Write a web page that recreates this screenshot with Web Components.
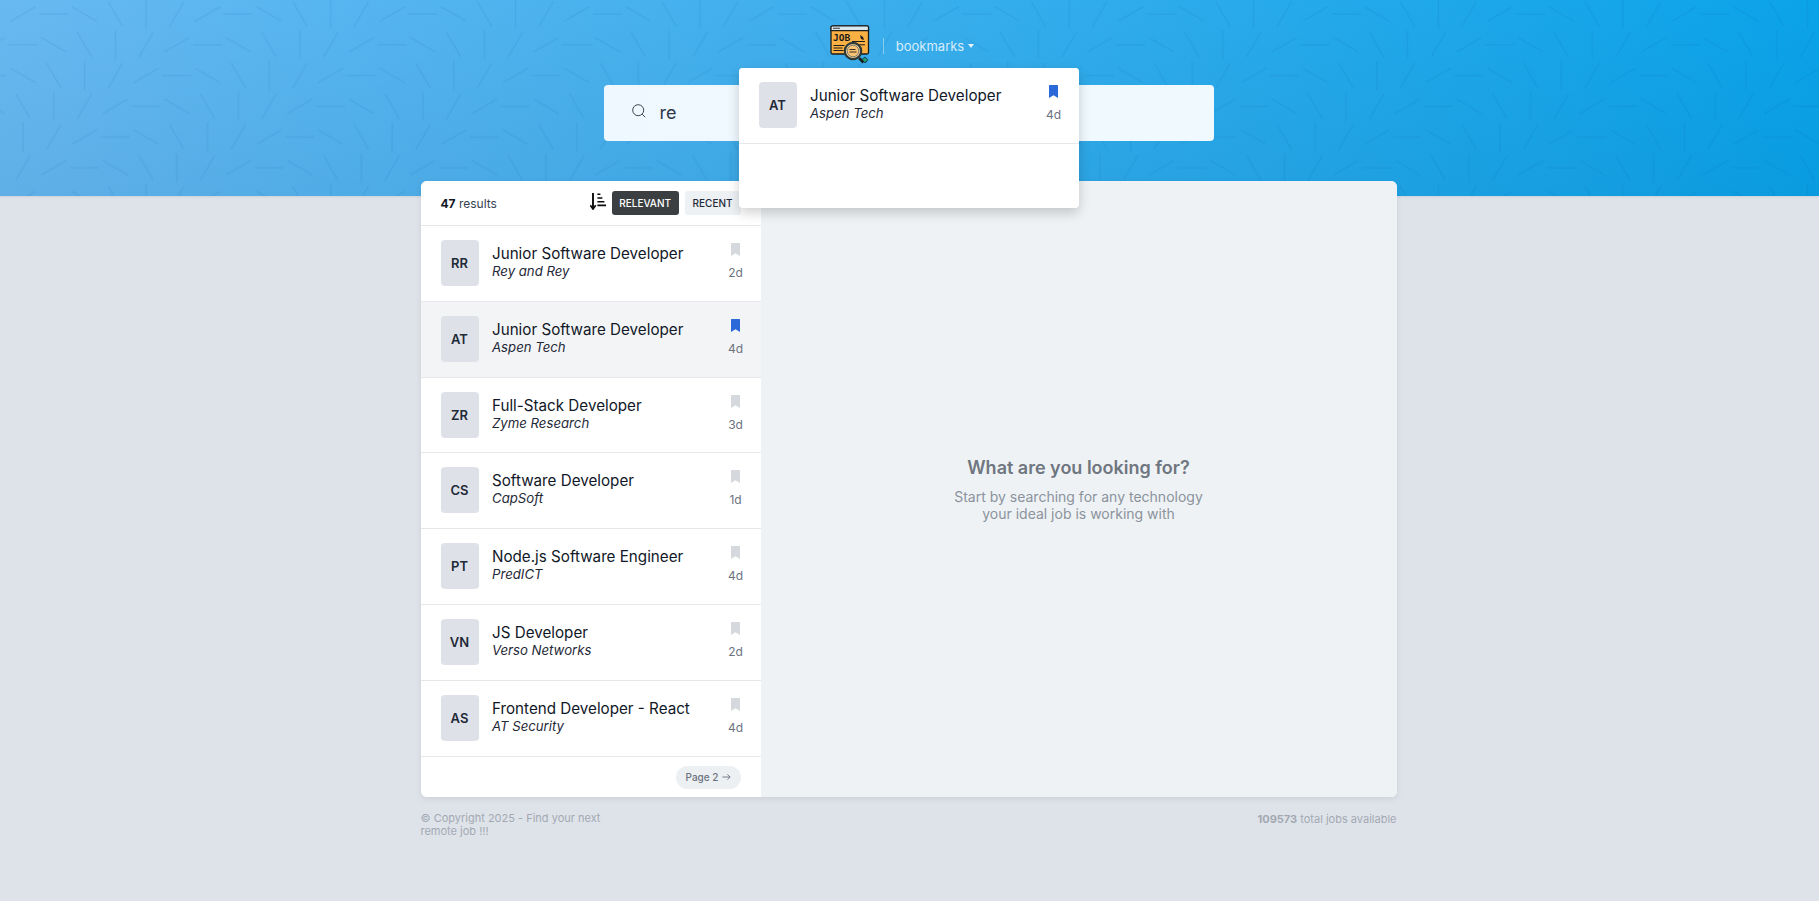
<!DOCTYPE html>
<html lang="en"><head><meta charset="utf-8"><title>Jobs</title>
<style>
html,body{margin:0;padding:0;height:100%}
body{background:#dee3e9;font-family:Inter,"Liberation Sans",sans-serif;color:#111827;overflow:hidden}
</style></head><body>
<job-page>
  <hero-band slot="hero"></hero-band>
  <job-board slot="board">
    <job-row initials="RR" age="2d"><span slot="title">Junior Software Developer</span><span slot="company">Rey and Rey</span></job-row>
    <job-row initials="AT" age="4d" active saved><span slot="title">Junior Software Developer</span><span slot="company">Aspen Tech</span></job-row>
    <job-row initials="ZR" age="3d"><span slot="title">Full-Stack Developer</span><span slot="company">Zyme Research</span></job-row>
    <job-row initials="CS" age="1d"><span slot="title">Software Developer</span><span slot="company">CapSoft</span></job-row>
    <job-row initials="PT" age="4d"><span slot="title">Node.js Software Engineer</span><span slot="company">PredICT</span></job-row>
    <job-row initials="VN" age="2d"><span slot="title">JS Developer</span><span slot="company">Verso Networks</span></job-row>
    <job-row initials="AS" age="4d"><span slot="title">Frontend Developer - React</span><span slot="company">AT Security</span></job-row>
  </job-board>
  <page-foot slot="foot"></page-foot>
</job-page>
<script>
const def=(name,html,init)=>customElements.define(name,class extends HTMLElement{
  constructor(){super();this.attachShadow({mode:'open'}).innerHTML=typeof html==='function'?html(this):html;}
  connectedCallback(){if(init&&!this._i){this._i=1;init(this);}}
});

def('job-page',`<style>:host{display:block}
.board{width:976px;margin:-15px auto 0;position:relative;left:-1px}
</style><slot name="hero"></slot><div class="board"><slot name="board"></slot><slot name="foot"></slot></div>`);

def('bookmark-icon',`<style>:host{display:block;width:9px;height:13px;color:#d5d8dd}
:host([saved]){color:#2b69d9}
svg{display:block;width:9px;height:13px;fill:currentColor}</style>
<svg viewBox="0 0 9 13"><path d="M0 .6C0 .3.3 0 .6 0h7.800c.3 0 .6.3.6.6V13L4.500 10.200 0 13z"/></svg>`);

def('job-row',`<style>
:host{display:flex;box-sizing:border-box;height:75.8px;padding:14px 20px 0;border-bottom:1px solid #e5e7eb;background:#fff;align-items:flex-start}
:host([active]){background:#f3f4f6}
.av{width:38px;height:46px;border-radius:4px;background:#dee2e8;display:flex;align-items:center;justify-content:center;font-size:13px;font-weight:600;color:#1f2937;flex:none}
.txt{flex:1;margin-left:13.500px;min-width:0;padding-top:4px}
.t{font-size:15.200px;line-height:20px;font-weight:400;color:#111827}
.c{font-size:13.200px;line-height:16px;font-style:italic;color:#1f2937;margin-top:-1px}
.r{display:flex;flex-direction:column;align-items:center;width:14px;margin-right:-2px;padding-top:3px}
.a{font-size:12px;line-height:16px;margin-top:9px;color:#6b7280;white-space:nowrap}
</style><div class="av" id="av"></div><div class="txt"><div class="t"><slot name="title"></slot></div><div class="c"><slot name="company"></slot></div></div>
<div class="r"><bookmark-icon id="bm"></bookmark-icon><div class="a" id="ag"></div></div>`,el=>{
  const s=el.shadowRoot;s.getElementById('av').textContent=el.getAttribute('initials');
  s.getElementById('ag').textContent=el.getAttribute('age');
  if(el.hasAttribute('saved'))s.getElementById('bm').setAttribute('saved','');
});

def('sort-bar',`<style>
:host{display:flex;align-items:center;box-sizing:border-box;height:45px;padding:0 20px;border-bottom:1px solid #e5e7eb;font-size:12px;color:#374151}
b{font-weight:700;color:#111827}
.sp{flex:1}
svg{display:block;width:16px;height:17px;margin-right:6px;margin-top:-3px}
button{all:unset;box-sizing:border-box;height:24px;display:flex;align-items:center;padding:0 7.500px;border-radius:3px;font-size:10px;font-weight:500;font-family:inherit}
.on{background:#3b3f42;color:#fff;font-weight:500}
.off{background:#edf1f4;color:#1f2937;margin-left:6px;padding:0 8px}
</style><span><b>47</b> results</span><span class="sp"></span>
<svg viewBox="0 0 16 17" fill="none" stroke="#0c0c0c" stroke-width="1.900"><path d="M3 0v15.500"/><path d="M.3 12.300 3 16l2.700-3.700" stroke-width="1.700"/><path d="M7.400 1.200h3M7.400 5h5M7.400 8.800h7M7.400 12.400h8.600" stroke-width="1.600"/></svg>
<button class="on">RELEVANT</button><button class="off">RECENT</button>`);

def('job-board',`<style>
:host{display:flex;height:616px;border-radius:6px;overflow:hidden;box-shadow:0 2px 6px rgba(0,0,0,.08);background:#fff}
.list{width:340px;flex:none;display:flex;flex-direction:column;background:#fff}
.pg{flex:1;display:flex;justify-content:flex-end;align-items:center;padding:1px 20px 0}
.pill{display:flex;align-items:center;gap:3px;height:23px;padding:0 10px;border-radius:12px;background:#edf0f3;color:#6b7280;font-size:10px;font-weight:500}
.pill svg{width:9px;height:8px;display:block}
.empty{flex:1;background:#eef2f5;display:flex;flex-direction:column;align-items:center;justify-content:center;text-align:center;padding-top:0}
h2{margin:0 0 8px;font-size:18px;line-height:24px;font-weight:600;color:#6f767f}
p{margin:0;font-size:14px;line-height:17px;color:#8b929c}
</style><div class="list"><sort-bar></sort-bar><slot></slot>
<div class="pg"><div class="pill">Page 2<svg viewBox="0 0 10 8" fill="none" stroke="#6b7280" stroke-width="1"><path d="M.5 4h8.500M6 1l3 3-3 3"/></svg></div></div></div>
<div class="empty"><h2>What are you looking for?</h2><p>Start by searching for any technology<br>your ideal job is working with</p></div>`);

def('page-foot',`<style>
:host{display:flex;justify-content:space-between;align-items:flex-start;padding-top:15px;font-size:11px;line-height:13px;color:#a3a9b3}
.l{width:200px}
.t{margin-top:1px}
b{font-weight:700}
</style><div class="l">© Copyright 2025 - Find your next remote job !!!</div><div class="t"><b>109573</b> total jobs available</div>`);

def('brand-logo',`<style>:host{display:block;width:42px;height:40px}svg{display:block}text{font-family:"DejaVu Sans Mono","Liberation Mono",monospace;font-weight:700;font-size:9.500px;fill:#1b1b1b}</style>
<svg width="42" height="40" viewBox="0 0 42 40">
<rect x="1" y="1" width="37.500" height="28" rx="1.500" fill="#fbb044" stroke="#1d1d1b" stroke-width="1.300"/>
<path d="M1 5.600V2.500C1 1.700 1.700 1 2.500 1H37c.8 0 1.500.7 1.500 1.500V5.600z" fill="#d9e7ee" stroke="#1d1d1b" stroke-width="1.200"/>
<path d="M3 3.300h7" stroke="#555" stroke-width="1.200"/>
<text x="3" y="15.500">JOB</text>
<path d="M22 16.500h13M27 19.800h8M3.500 20.500h11M3.500 23h9M3.500 25.500h10" stroke="#1d1d1b" stroke-width="1"/>
<path d="M30 10l3 2 1 3-3-1z" fill="#1d1d1b"/>
<path d="M29 33l4.500 4.500" stroke="#1d1d1b" stroke-width="2.600"/>
<path d="M32 34.500l3-2.500 2.800 2.700-2.500 3.300z" fill="#1f9d74" stroke="#123" stroke-width=".8"/>
<circle cx="23" cy="26" r="8.200" fill="#f7cb8e" stroke="#2d3a3a" stroke-width="2.200"/>
<circle cx="23" cy="26" r="5.800" fill="#fbc272" stroke="#66787a" stroke-width=".9"/>
<path d="M19.500 24.500h6M19.500 27h7" stroke="#1d1d1b" stroke-width=".9"/>
</svg>`);

def('saved-menu',`<style>
:host{display:block;position:absolute;top:68px;left:50%;margin-left:-171px;width:340px;height:140px;background:#fff;border-radius:4px;box-shadow:0 5px 12px rgba(0,0,0,.18);z-index:5;overflow:hidden;color:#111827}
</style><job-row initials="AT" age="4d" saved><span slot="title">Junior Software Developer</span><span slot="company">Aspen Tech</span></job-row>`);

def('search-box',`<style>
:host{display:flex;align-items:center;box-sizing:border-box;width:610px;height:56px;margin:0 auto;padding-left:28px;border-radius:4px;background:linear-gradient(90deg,#eff8fe,#f0f9fe);left:-1px}
svg{width:14px;height:14px;display:block;margin-top:-5px}
span{margin-left:14px;margin-top:-2px;font-size:18px;font-weight:400;color:#2d3748}
</style><svg viewBox="0 0 14 14" fill="none" stroke="#3b4450" stroke-width="1"><circle cx="6.200" cy="6.200" r="5.500"/><path d="M10.200 10.200 13.200 13.200"/></svg><span>re</span>`);

def('hero-band',`<style>
:host{display:block;position:relative;height:196px;box-sizing:border-box;background:linear-gradient(180deg,rgba(0,50,100,0),rgba(0,50,100,.07)),linear-gradient(95deg,#68b9f1 0%,#0aa3e8 100%);box-shadow:0 1px 2px rgba(0,0,0,.08)}
svg.bg{position:absolute;inset:0;width:100%;height:100%;display:block}
.nav{position:relative;display:flex;justify-content:center;align-items:flex-start;height:85px;box-sizing:border-box;padding:25px 0 0 0}
.in{display:flex;align-items:flex-start;margin-left:-15px}
.sep{width:1px;height:16px;background:rgba(255,255,255,.4);margin:13px 12px 0 11px}
.bk{font-size:13px;line-height:16px;color:#d6edfb;margin-top:13px;display:flex;align-items:center;gap:4px}
.bk i{display:block;width:0;height:0;border:3.500px solid transparent;border-top:4px solid #e3f2fc;border-bottom:0;}
search-box{position:relative}
</style>
<svg class="bg" aria-hidden="true"><defs><pattern id="p" width="184.600" height="184.600" patternUnits="userSpaceOnUse"><g id="g" stroke="#004a94" stroke-opacity=".085" stroke-width="1.500" fill="none"></g></pattern></defs><rect width="100%" height="100%" fill="url(#p)"/></svg>
<div class="nav"><div class="in"><brand-logo></brand-logo><div class="sep"></div><div class="bk">bookmarks<i></i></div></div></div>
<search-box></search-box><saved-menu></saved-menu>`,el=>{
  const g=el.shadowRoot.getElementById('g'),S=184.6/6;let h='';
  for(let r=-1;r<7;r++)for(let c=-1;c<7;c++){
    const i=((c+r)%6+6)%6,a=(-30+30*i)*Math.PI/180,x=23+S*c,y=14+S*r,dx=14.5*Math.cos(a),dy=14.5*Math.sin(a);
    h+=`<path d="M${(x-dx).toFixed(2)} ${(y-dy).toFixed(2)}L${(x+dx).toFixed(2)} ${(y+dy).toFixed(2)}"/>`;
  }
  g.innerHTML=h;
});
</script>
</body></html>
